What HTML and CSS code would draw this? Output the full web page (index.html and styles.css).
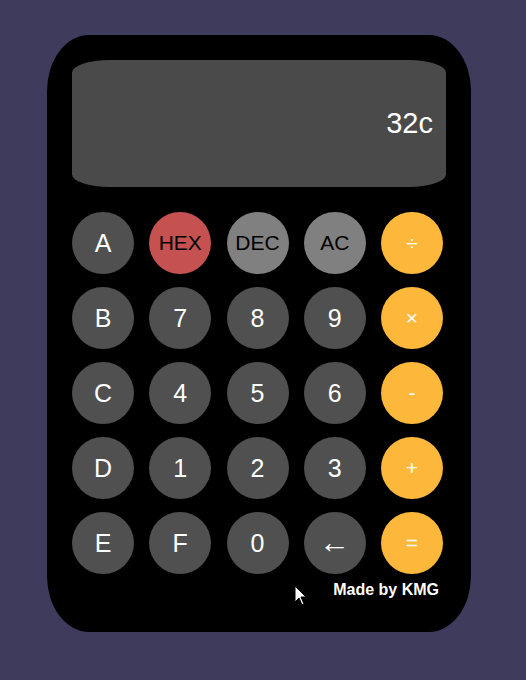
FILE: index.html
```html
<!DOCTYPE html>
<html lang="en">
<head>
<meta charset="utf-8">
<title>Calculator</title>
<link rel="stylesheet" href="styles.css">
</head>
<body>
<div class="calc">
  <div class="display"><span class="value">32c</span></div>
  <div class="keys">
    <button class="key num">A</button>
    <button class="key fn hex">HEX</button>
    <button class="key fn">DEC</button>
    <button class="key fn">AC</button>
    <button class="key op">÷</button>

    <button class="key num">B</button>
    <button class="key num">7</button>
    <button class="key num">8</button>
    <button class="key num">9</button>
    <button class="key op">×</button>

    <button class="key num">C</button>
    <button class="key num">4</button>
    <button class="key num">5</button>
    <button class="key num">6</button>
    <button class="key op">-</button>

    <button class="key num">D</button>
    <button class="key num">1</button>
    <button class="key num">2</button>
    <button class="key num">3</button>
    <button class="key op">+</button>

    <button class="key num">E</button>
    <button class="key num">F</button>
    <button class="key num">0</button>
    <button class="key num arrow">←</button>
    <button class="key op">=</button>
  </div>
  <div class="credit">Made by KMG</div>
</div>
<svg class="cursor" width="14" height="22" viewBox="0 0 14 22">
  <path d="M1 1 L1 17 L5 13 L8 20 L10 19 L7 12 L12 12 Z" fill="#fff" stroke="#000" stroke-width="1"/>
</svg>
</body>
</html>
```

FILE: styles.css
```css
html, body {
  margin: 0;
  padding: 0;
}
body {
  background: #3f3b5c;
  font-family: "Liberation Sans", Arial, sans-serif;
  width: 526px;
  height: 680px;
  overflow: hidden;
  position: relative;
}
.calc {
  box-sizing: border-box;
  margin: 35px 0 0 47px;
  width: 424px;
  height: 597px;
  padding: 25px;
  background: #000;
  border-radius: 42px / 56px;
  display: flex;
  flex-direction: column;
}
.display {
  height: 127px;
  background: #4a4a4a;
  border-radius: 10%;
  display: flex;
  align-items: center;
  justify-content: flex-end;
  padding-right: 13px;
}
.value {
  color: #fff;
  font-size: 29px;
}
.keys {
  margin-top: 25px;
  display: grid;
  grid-template-columns: repeat(5, 62px);
  grid-auto-rows: 62px;
  column-gap: 15.25px;
  row-gap: 13px;
}
.key {
  width: 62px;
  height: 62px;
  border: 0;
  padding: 0;
  border-radius: 50%;
  font-family: "Liberation Sans", Arial, sans-serif;
  display: flex;
  align-items: center;
  justify-content: center;
}
.num {
  background: #505050;
  color: #fff;
  font-size: 25px;
}
.fn {
  background: #808080;
  color: #000;
  font-size: 21px;
}
.hex {
  background: #c55251;
}
.op {
  background: #fdb83c;
  color: #fff;
  font-size: 21px;
}
.arrow {
  font-size: 31px;
}
.credit {
  margin-top: 7px;
  padding-right: 7px;
  text-align: right;
  color: #fff;
  font-weight: bold;
  font-size: 16px;
  line-height: 17px;
}
.cursor {
  position: absolute;
  left: 294px;
  top: 585px;
}
```
